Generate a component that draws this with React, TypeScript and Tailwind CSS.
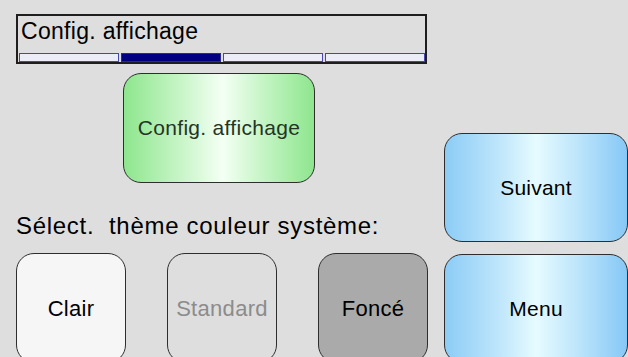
import React from "react";

const font = { fontFamily: '"Liberation Sans", Arial, sans-serif' };

export default function App() {
  return (
    <div
      className="w-[628px] h-[357px] overflow-hidden bg-[#dedede] flex pl-[16px] text-black"
      style={font}
    >
      {/* Left column */}
      <div className="w-[411px] shrink-0 flex flex-col pt-[14px]">
        {/* Header */}
        <div className="h-[50px] shrink-0 border-2 border-[#1e1e1e] flex flex-col justify-between">
          <div className="pl-[3px] pt-[2px] text-[23px] leading-[27px] tracking-[0.3px]">Config. affichage</div>
          <div className="flex gap-[2px] pl-[1px] h-[9px]">
            <div className="w-[100px] h-full border-[1.5px] border-[#4646b0] bg-[#ececf6]" />
            <div className="w-[100px] h-full border-[1.5px] border-[#2a2a90] bg-[#000080]" />
            <div className="w-[100px] h-full border-[1.5px] border-[#4646b0] bg-[#ececf6]" />
            <div className="w-[100px] h-full border-[1.5px] border-[#4646b0] bg-[#ececf6]" />
          </div>
        </div>

        {/* Green button */}
        <div className="ml-[107px] mt-[9px] w-[192px] h-[110px] shrink-0 rounded-[18px] border-[1.5px] border-[#2e2e2e] bg-[linear-gradient(to_right,#8ee68e_0%,#c8f5c8_30%,#f4fff4_52%,#c8f5c8_72%,#8ee68e_100%)] flex items-center justify-center text-[#253525] text-[21px] tracking-[0.3px]">
          Config. affichage
        </div>

        {/* Label */}
        <div className="mt-[31px] shrink-0 text-[24px] leading-[24px] tracking-[0.7px] whitespace-pre">
          {"Sélect.  thème couleur système:"}
        </div>

        {/* Theme buttons */}
        <div className="mt-[15px] shrink-0 flex gap-[41px]">
          <div className="w-[110px] h-[110px] shrink-0 rounded-[18px] border-[1.5px] border-[#2e2e2e] bg-[#f6f6f6] flex items-center justify-center text-[22px] tracking-[0.3px]">
            Clair
          </div>
          <div className="w-[110px] h-[110px] shrink-0 rounded-[18px] border-[1.5px] border-[#2e2e2e] bg-[#dedede] flex items-center justify-center text-[22px] tracking-[0.3px] text-[#8c8c8c]">
            Standard
          </div>
          <div className="w-[110px] h-[110px] shrink-0 rounded-[18px] border-[1.5px] border-[#2e2e2e] bg-[#aaaaaa] flex items-center justify-center text-[22px] tracking-[0.3px]">
            Foncé
          </div>
        </div>
      </div>

      {/* Right column */}
      <div className="ml-[17px] w-[184px] shrink-0 flex flex-col pt-[133px] gap-[12px]">
        <div className="h-[109px] shrink-0 rounded-[18px] border-[1.5px] border-[#2e2e2e] bg-[linear-gradient(to_right,#8cccf6_0%,#bfe6fb_30%,#e6fbff_50%,#bfe6fb_72%,#86c8f6_100%)] flex items-center justify-center text-[21px] tracking-[0.2px]">
          Suivant
        </div>
        <div className="h-[109px] shrink-0 rounded-[18px] border-[1.5px] border-[#2e2e2e] bg-[linear-gradient(to_right,#8cccf6_0%,#bfe6fb_30%,#e6fbff_50%,#bfe6fb_72%,#86c8f6_100%)] flex items-center justify-center text-[21px] tracking-[0.3px]">
          Menu
        </div>
      </div>
    </div>
  );
}
